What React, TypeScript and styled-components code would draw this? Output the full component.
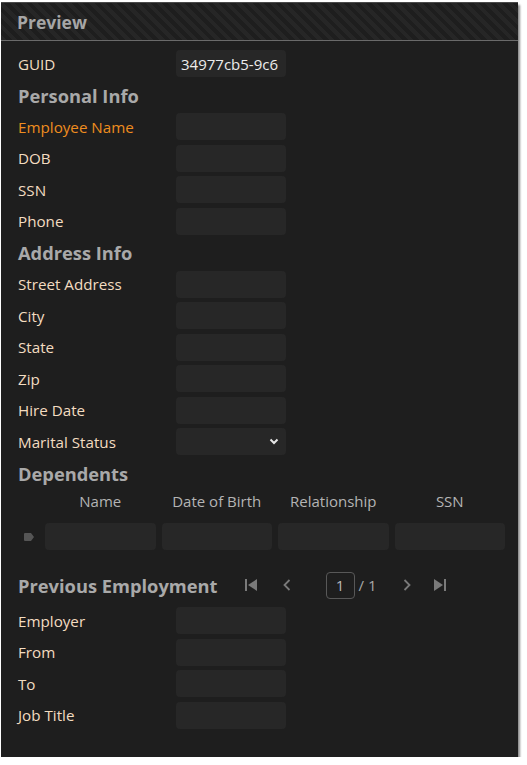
import React from "react";
import styled, { createGlobalStyle } from "styled-components";

const GlobalStyle = createGlobalStyle`
  html, body {
    margin: 0;
    padding: 0;
    background: #ffffff;
  }
  body {
    font-family: "Open Sans", "Noto Sans", sans-serif;
  }
`;

interface Field {
  label: string;
  value?: string;
  select?: boolean;
  active?: boolean;
}

const personal: Field[] = [
  { label: "Employee Name", active: true },
  { label: "DOB" },
  { label: "SSN" },
  { label: "Phone" },
];

const address: Field[] = [
  { label: "Street Address" },
  { label: "City" },
  { label: "State" },
  { label: "Zip" },
  { label: "Hire Date" },
  { label: "Marital Status", select: true },
];

const employment: Field[] = [
  { label: "Employer" },
  { label: "From" },
  { label: "To" },
  { label: "Job Title" },
];

const columns = ["Name", "Date of Birth", "Relationship", "SSN"];

function FieldRow({ field }: { field: Field }) {
  return (
    <Row>
      <Label active={field.active}>{field.label}</Label>
      <Input>
        {field.value}
        {field.select && (
          <Chevron width="10" height="7" viewBox="0 0 10 7">
            <path d="M1.5 1.5L5 5L8.5 1.5" stroke="#e6e6e6" strokeWidth="2" fill="none" />
          </Chevron>
        )}
      </Input>
    </Row>
  );
}

export default function App() {
  return (
    <>
      <GlobalStyle />
      <Panel>
        <Header>Preview</Header>
        <Body>
          <FieldRow field={{ label: "GUID", value: "34977cb5-9c6" }} />
          <Heading>Personal Info</Heading>
          {personal.map((f) => (
            <FieldRow key={f.label} field={f} />
          ))}
          <Heading>Address Info</Heading>
          {address.map((f) => (
            <FieldRow key={f.label} field={f} />
          ))}
          <Heading>Dependents</Heading>
          <Grid>
            <span />
            {columns.map((c) => (
              <ColHead key={c}>{c}</ColHead>
            ))}
            <Indicator>
              <svg width="10" height="8" viewBox="0 0 10 8">
                <path d="M0 1Q0 0 1 0H7L10 4L7 8H1Q0 8 0 7Z" fill="#555" />
              </svg>
            </Indicator>
            {columns.map((c) => (
              <Cell key={c} />
            ))}
          </Grid>
          <PagerRow>
            <Heading>Previous Employment</Heading>
            <Pager>
              <PagerButton>
                <svg width="14" height="14" viewBox="0 0 14 14">
                  <rect x="1" y="1" width="2" height="12" fill="#7a7a7a" />
                  <path d="M13 1V13L4 7Z" fill="#7a7a7a" />
                </svg>
              </PagerButton>
              <PagerButton>
                <svg width="10" height="14" viewBox="0 0 10 14">
                  <path d="M7.5 2L2.5 7L7.5 12" stroke="#7a7a7a" strokeWidth="1.8" fill="none" />
                </svg>
              </PagerButton>
              <PageBox>1</PageBox>
              <PageTotal>/ 1</PageTotal>
              <PagerButton>
                <svg width="10" height="14" viewBox="0 0 10 14">
                  <path d="M2.5 2L7.5 7L2.5 12" stroke="#7a7a7a" strokeWidth="1.8" fill="none" />
                </svg>
              </PagerButton>
              <PagerButton narrow>
                <svg width="14" height="14" viewBox="0 0 14 14">
                  <path d="M1 1V13L10 7Z" fill="#7a7a7a" />
                  <rect x="11" y="1" width="2" height="12" fill="#7a7a7a" />
                </svg>
              </PagerButton>
            </Pager>
          </PagerRow>
          {employment.map((f) => (
            <FieldRow key={f.label} field={f} />
          ))}
        </Body>
      </Panel>
    </>
  );
}

const Panel = styled.div`
  margin: 2px 0 0 1px;
  width: 517px;
  height: 755px;
  box-sizing: border-box;
  background: #1e1e1e;
  border-top: 1px solid #4a4a4a;
  box-shadow: 2px 3px 2px rgba(0, 0, 0, 0.45);
  display: flex;
  flex-direction: column;
`;

const Header = styled.div`
  height: 37px;
  border-bottom: 1px solid #6a6a6a;
  padding: 0 16px;
  display: flex;
  align-items: center;
  font-size: 17.5px;
  font-weight: 700;
  color: #a6a6a6;
  background: repeating-linear-gradient(
    45deg,
    #262626 0px,
    #262626 4px,
    #1e1e1e 4px,
    #1e1e1e 8px
  );
`;

const Body = styled.div`
  display: flex;
  flex-direction: column;
  gap: 4.5px;
  padding: 9px 0 0 17px;
`;

const Row = styled.div`
  display: grid;
  grid-template-columns: 158px 110px;
  align-items: center;
  height: 27px;
`;

const Label = styled.span<{ active?: boolean }>`
  font-size: 15.2px;
  color: ${(p) => (p.active ? "#ee8d1f" : "#f3dcc1")};
  white-space: nowrap;
`;

const Input = styled.div`
  height: 27px;
  box-sizing: border-box;
  border-radius: 4px;
  background: #272727;
  padding: 0 5px;
  display: flex;
  align-items: center;
  font-size: 15px;
  color: #ececec;
  overflow: hidden;
  white-space: nowrap;
`;

const Chevron = styled.svg`
  margin-left: auto;
  margin-right: 2px;
`;

const Heading = styled.div`
  height: 27px;
  line-height: 27px;
  font-size: 18.3px;
  font-weight: 700;
  color: #a9a9a9;
  white-space: nowrap;
`;

const Grid = styled.div`
  display: grid;
  grid-template-columns: 21px repeat(4, 110.5px);
  column-gap: 6px;
  row-gap: 10px;
  align-items: center;
  margin-top: -2px;
`;

const ColHead = styled.div`
  height: 24px;
  line-height: 24px;
  text-align: center;
  font-size: 15px;
  color: #b4b4b4;
  white-space: nowrap;
`;

const Indicator = styled.div`
  display: flex;
  align-items: center;
  padding-left: 6px;
`;

const Cell = styled.div`
  height: 27px;
  border-radius: 4px;
  background: #272727;
`;

const PagerRow = styled.div`
  display: flex;
  align-items: center;
  margin: 17px 0 4px;
`;

const Pager = styled.div`
  display: flex;
  align-items: center;
  margin-left: 15px;
`;

const PagerButton = styled.div<{ narrow?: boolean }>`
  width: ${(p) => (p.narrow ? "30px" : "36px")};
  display: flex;
  justify-content: center;
  align-items: center;
`;

const PageBox = styled.div`
  margin-left: 21px;
  width: 29px;
  height: 27px;
  box-sizing: border-box;
  border: 1px solid #585858;
  border-radius: 4px;
  display: flex;
  align-items: center;
  justify-content: center;
  font-size: 15px;
  color: #b8b8b8;
`;

const PageTotal = styled.span`
  margin: 0 13px 0 4px;
  font-size: 15px;
  color: #a8a8a8;
`;
